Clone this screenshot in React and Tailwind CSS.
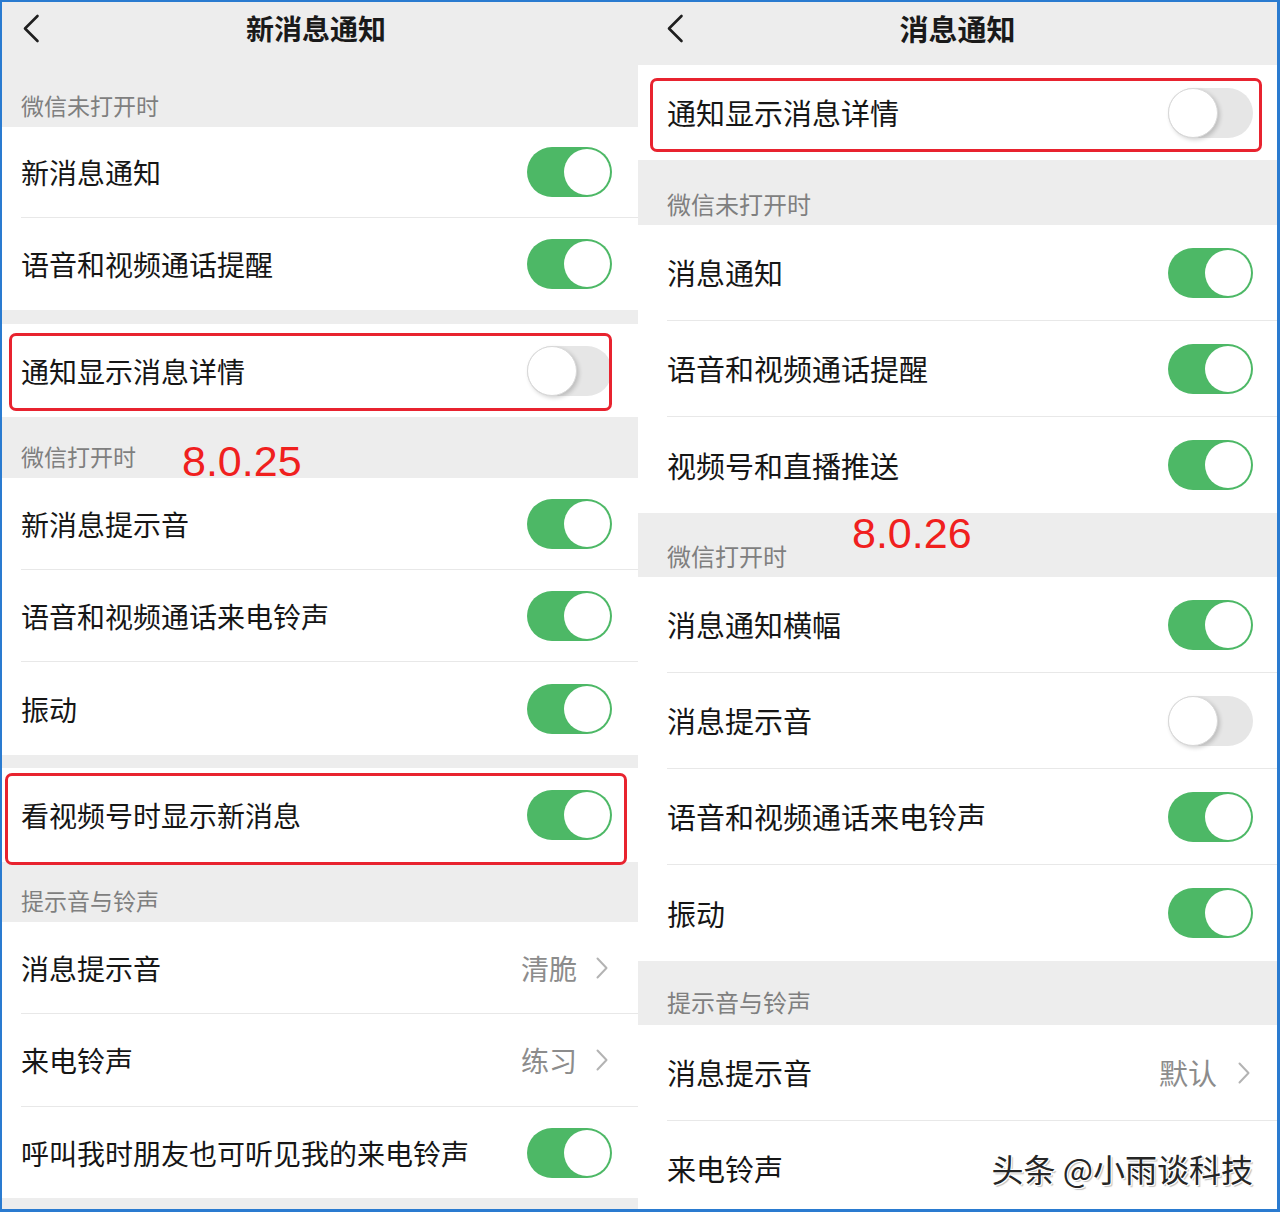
import React from "react";

const FONT = "[font-family:'Noto_Sans_CJK_SC','Noto_Sans',sans-serif]";

function Toggle({ on }) {
  if (on) {
    return (
      <div className="w-[85px] h-[50px] rounded-full bg-[#4db866] flex items-center justify-end p-[2px] shrink-0">
        <div className="w-[46px] h-[46px] rounded-full bg-white" />
      </div>
    );
  }
  return (
    <div className="w-[85px] h-[50px] rounded-full bg-[#e6e6e6] flex items-center justify-start shrink-0">
      <div className="w-[50px] h-[50px] rounded-full bg-white border border-[#d8d8d8] shadow-[2px_2px_4px_rgba(0,0,0,0.18)]" />
    </div>
  );
}

function Chevron() {
  return (
    <svg width="12" height="22" viewBox="0 0 12 22" className="shrink-0">
      <polyline points="1.5,1.5 10.5,11 1.5,20.5" fill="none" stroke="#b3b3b3" strokeWidth="2" strokeLinecap="round" strokeLinejoin="round" />
    </svg>
  );
}

function Back() {
  return (
    <svg width="18" height="29" viewBox="0 0 18 29">
      <polyline points="15.5,2 3,14.5 15.5,27" fill="none" stroke="#1f1f1f" strokeWidth="2.6" strokeLinecap="round" strokeLinejoin="round" />
    </svg>
  );
}

function Row({ h, label, right, divider, pl, pr, size, box }) {
  return (
    <div className={`bg-white relative shrink-0 ${h} ${pl}`}>
      <div className={`h-full flex items-center justify-between ${pr} ${divider ? "border-b border-[#e8e8e8]" : ""}`}>
        <span className={`${size} text-[#161616] leading-none whitespace-nowrap`}>{label}</span>
        {right}
      </div>
      {box}
    </div>
  );
}

function Value({ text, size, gap, mr }) {
  return (
    <div className={`flex items-center ${mr}`}>
      <span className={`${size} text-[#8c8c8c] leading-none`}>{text}</span>
      <div className={gap}>
        <Chevron />
      </div>
    </div>
  );
}

function LeftPanel() {
  const L = { pl: "pl-[19px]", pr: "pr-[26px]", size: "text-[28px]" };
  return (
    <div className="w-[636px] shrink-0 flex flex-col bg-[#ededed]">
      <div className="h-[52px] shrink-0 grid grid-cols-[1fr_auto_1fr] items-center">
        <div className="pl-[20px] flex items-center">
          <Back />
        </div>
        <span className="text-[28px] font-bold text-[#1a1a1a] leading-none -translate-x-[4px]">新消息通知</span>
        <div />
      </div>
      <div className="h-[73px] shrink-0 flex items-end pl-[19px] pb-[7px]">
        <span className="text-[23px] leading-[30px] text-[#7f7f7f]">微信未打开时</span>
      </div>
      <Row h="h-[91px]" label="新消息通知" right={<Toggle on />} divider {...L} />
      <Row h="h-[92px]" label="语音和视频通话提醒" right={<Toggle on />} {...L} />
      <div className="h-[14px] shrink-0" />
      <Row
        h="h-[93px]"
        label="通知显示消息详情"
        right={<Toggle on={false} />}
        {...L}
        box={<div className="absolute top-[9px] bottom-[6px] left-[7px] right-[26px] border-[3px] border-[#e8232f] rounded-[7px] pointer-events-none" />}
      />
      <div className="h-[61px] shrink-0 flex items-end pl-[19px]">
        <span className="text-[23px] leading-[30px] text-[#7f7f7f] pb-[7px]">微信打开时</span>
        <span className="self-start mt-[24px] ml-[46px] text-[43px] leading-[40px] text-[#f0201e] [font-family:'Liberation_Sans',Arial,sans-serif]">8.0.25</span>
      </div>
      <Row h="h-[92px]" label="新消息提示音" right={<Toggle on />} divider {...L} />
      <Row h="h-[92px]" label="语音和视频通话来电铃声" right={<Toggle on />} divider {...L} />
      <Row h="h-[93px]" label="振动" right={<Toggle on />} {...L} />
      <div className="h-[13px] shrink-0" />
      <Row
        h="h-[94px]"
        label="看视频号时显示新消息"
        right={<Toggle on />}
        {...L}
        box={<div className="absolute top-[5px] -bottom-[3px] left-[3px] right-[11px] border-[3px] border-[#e8232f] rounded-[7px] pointer-events-none" />}
      />
      <div className="h-[60px] shrink-0 flex items-end pl-[19px] pb-[7px]">
        <span className="text-[23px] leading-[30px] text-[#7f7f7f]">提示音与铃声</span>
      </div>
      <Row h="h-[92px]" label="消息提示音" right={<Value text="清脆" size="text-[28px]" gap="ml-[19px]" mr="mr-[4px]" />} divider {...L} />
      <Row h="h-[93px]" label="来电铃声" right={<Value text="练习" size="text-[28px]" gap="ml-[19px]" mr="mr-[4px]" />} divider {...L} />
      <Row h="h-[91px]" label="呼叫我时朋友也可听见我的来电铃声" right={<Toggle on />} {...L} />
      <div className="flex-1" />
    </div>
  );
}

function RightPanel() {
  const R = { pl: "pl-[29px]", pr: "pr-[24px]", size: "text-[29px]" };
  return (
    <div className="flex-1 flex flex-col bg-[#ededed]">
      <div className="h-[63px] shrink-0 grid grid-cols-[1fr_auto_1fr] items-start pt-[8px]">
        <div className="pl-[28px] h-[36px] flex items-center">
          <Back />
        </div>
        <span className="text-[29px] font-bold text-[#1a1a1a] leading-[36px]">消息通知</span>
        <div />
      </div>
      <Row
        h="h-[95px]"
        label="通知显示消息详情"
        right={<Toggle on={false} />}
        {...R}
        box={<div className="absolute top-[13px] bottom-[8px] left-[12px] right-[15px] border-[3px] border-[#e8232f] rounded-[7px] pointer-events-none" />}
      />
      <div className="h-[65px] shrink-0 flex items-end pl-[29px] pb-[6px]">
        <span className="text-[24px] leading-[30px] text-[#7f7f7f]">微信未打开时</span>
      </div>
      <Row h="h-[96px]" label="消息通知" right={<Toggle on />} divider {...R} />
      <Row h="h-[96px]" label="语音和视频通话提醒" right={<Toggle on />} divider {...R} />
      <Row h="h-[96px]" label="视频号和直播推送" right={<Toggle on />} {...R} />
      <div className="h-[64px] shrink-0 flex items-end pl-[29px]">
        <span className="text-[24px] leading-[30px] text-[#7f7f7f] pb-[6px]">微信打开时</span>
        <span className="self-start ml-[65px] text-[43px] leading-[40px] text-[#f0201e] [font-family:'Liberation_Sans',Arial,sans-serif]">8.0.26</span>
      </div>
      <Row h="h-[96px]" label="消息通知横幅" right={<Toggle on />} divider {...R} />
      <Row h="h-[96px]" label="消息提示音" right={<Toggle on={false} />} divider {...R} />
      <Row h="h-[96px]" label="语音和视频通话来电铃声" right={<Toggle on />} divider {...R} />
      <Row h="h-[96px]" label="振动" right={<Toggle on />} {...R} />
      <div className="h-[64px] shrink-0 flex items-end pl-[29px] pb-[8px]">
        <span className="text-[24px] leading-[30px] text-[#7f7f7f]">提示音与铃声</span>
      </div>
      <Row h="h-[96px]" label="消息提示音" right={<Value text="默认" size="text-[29px]" gap="ml-[21px]" mr="mr-[3px]" />} divider {...R} />
      <Row
        h="h-[94px]"
        label="来电铃声"
        right={
          <span className="text-[32px] leading-none text-[#262626] whitespace-nowrap [text-shadow:1px_1px_0_#fff,-1px_-1px_0_#fff,1px_-1px_0_#fff,-1px_1px_0_#fff,2px_2px_1px_rgba(0,0,0,0.25)]">
            头条 @小雨谈科技
          </span>
        }
        {...R}
      />
    </div>
  );
}

export default function App() {
  return (
    <div className={`w-[1280px] h-[1212px] border-t-2 border-l-2 border-r-[3px] border-b-[3px] border-[#2a7bd0] flex overflow-hidden bg-white ${FONT}`}>
      <LeftPanel />
      <RightPanel />
    </div>
  );
}
